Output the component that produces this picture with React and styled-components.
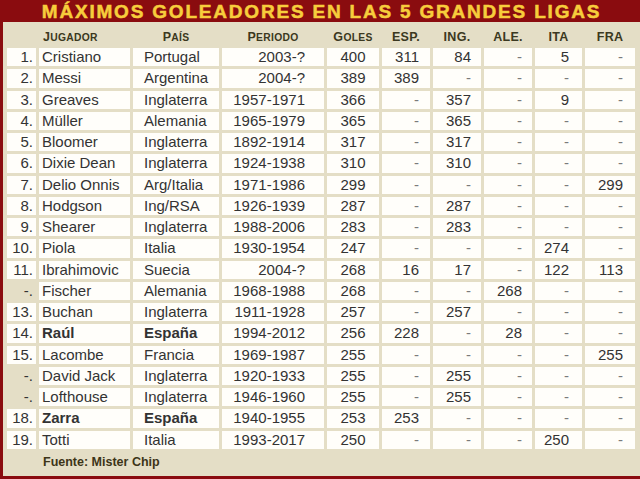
import React from 'react'
import styled, { createGlobalStyle } from 'styled-components'

const GlobalStyle = createGlobalStyle`
    html, body {
        margin: 0;
        padding: 0;
        width: 640px;
        height: 479px;
        overflow: hidden;
        background: #8a0c0f;
    }
`

const COLS = '29px 91px 86px 102px 52px 48px 48px 48px 47px 50px'

// column settings: align + padding
const cols = [
    { align: 'right', pad: '0 3px 0 0' },
    { align: 'left', pad: '0 0 0 3px' },
    { align: 'left', pad: '0 0 0 11px' },
    { align: 'right', pad: '0 19px 0 0' },
    { align: 'center', pad: '0' },
    { align: 'right', pad: '0 11px 0 0' },
    { align: 'right', pad: '0 10px 0 0' },
    { align: 'right', pad: '0 10px 0 0' },
    { align: 'right', pad: '0 13px 0 0' },
    { align: 'right', pad: '0 12px 0 0' },
]

const rows = [
    ['1.', 'Cristiano', 'Portugal', '2003-?', '400', '311', '84', '-', '5', '-'],
    ['2.', 'Messi', 'Argentina', '2004-?', '389', '389', '-', '-', '-', '-'],
    ['3.', 'Greaves', 'Inglaterra', '1957-1971', '366', '-', '357', '-', '9', '-'],
    ['4.', 'Müller', 'Alemania', '1965-1979', '365', '-', '365', '-', '-', '-'],
    ['5.', 'Bloomer', 'Inglaterra', '1892-1914', '317', '-', '317', '-', '-', '-'],
    ['6.', 'Dixie Dean', 'Inglaterra', '1924-1938', '310', '-', '310', '-', '-', '-'],
    ['7.', 'Delio Onnis', 'Arg/Italia', '1971-1986', '299', '-', '-', '-', '-', '299'],
    ['8.', 'Hodgson', 'Ing/RSA', '1926-1939', '287', '-', '287', '-', '-', '-'],
    ['9.', 'Shearer', 'Inglaterra', '1988-2006', '283', '-', '283', '-', '-', '-'],
    ['10.', 'Piola', 'Italia', '1930-1954', '247', '-', '-', '-', '274', '-'],
    ['11.', 'Ibrahimovic', 'Suecia', '2004-?', '268', '16', '17', '-', '122', '113'],
    ['-.', 'Fischer', 'Alemania', '1968-1988', '268', '-', '-', '268', '-', '-'],
    ['13.', 'Buchan', 'Inglaterra', '1911-1928', '257', '-', '257', '-', '-', '-'],
    ['14.', 'Raúl', 'España', '1994-2012', '256', '228', '-', '28', '-', '-', true],
    ['15.', 'Lacombe', 'Francia', '1969-1987', '255', '-', '-', '-', '-', '255'],
    ['-.', 'David Jack', 'Inglaterra', '1920-1933', '255', '-', '255', '-', '-', '-'],
    ['-.', 'Lofthouse', 'Inglaterra', '1946-1960', '255', '-', '255', '-', '-', '-'],
    ['18.', 'Zarra', 'España', '1940-1955', '253', '253', '-', '-', '-', '-', true],
    ['19.', 'Totti', 'Italia', '1993-2017', '250', '-', '-', '-', '250', '-'],
]

// small = first letter big, rest smaller caps
const headers = [
    { t: '' },
    { t: 'Jugador', small: true, left: true },
    { t: 'País', small: true },
    { t: 'Periodo', small: true },
    { t: 'Goles', small: true },
    { t: 'ESP.' },
    { t: 'ING.' },
    { t: 'ALE.' },
    { t: 'ITA' },
    { t: 'FRA' },
]

export default function App() {
    return (
        <Frame>
            <GlobalStyle />
            <Title>MÁXIMOS GOLEADORES EN LAS 5 GRANDES LIGAS</Title>
            <Panel>
                <HeadRow>
                    {headers.map((h, i) => (
                        <HeadCell key={i} $left={h.left}>
                            {h.small ? (
                                <>
                                    {h.t[0]}
                                    <SmallCaps>{h.t.slice(1)}</SmallCaps>
                                </>
                            ) : h.t}
                        </HeadCell>
                    ))}
                </HeadRow>
                <Table>
                    {rows.map((r, ri) => (
                        <Row key={ri}>
                            {r.slice(0, 10).map((v, ci) => (
                                <Cell
                                    key={ci}
                                    $align={cols[ci].align}
                                    $pad={cols[ci].pad}
                                    $blank={ci === 0 && v === '-.'}
                                    $bold={r[10] && (ci === 1 || ci === 2)}
                                    $dash={ci > 3 && v === '-'}
                                >
                                    {v}
                                </Cell>
                            ))}
                        </Row>
                    ))}
                </Table>
                <Source>Fuente: Mister Chip</Source>
            </Panel>
        </Frame>
    )
}

const Frame = styled.div`
    width: 640px;
    height: 479px;
    box-sizing: border-box;
    padding: 0 0 3px 3px;
    background: #8a0c0f;
    display: flex;
    flex-direction: column;
    font-family: "Liberation Sans", Arial, sans-serif;
`

const Title = styled.h1`
    margin: 0;
    height: 22px;
    line-height: 23px;
    text-align: center;
    font-size: 19px;
    font-weight: 700;
    letter-spacing: 1.8px;
    color: #f7cd3c;
    -webkit-text-stroke: 0.5px #f7cd3c;
    white-space: nowrap;
`

const Panel = styled.div`
    flex: 1;
    background: #e4dec6;
    padding: 8px 5px 0 4px;
    display: flex;
    flex-direction: column;
`

const HeadRow = styled.div`
    display: grid;
    grid-template-columns: ${COLS};
    column-gap: 3px;
    height: 14px;
`

const HeadCell = styled.div`
    font-size: 12.5px;
    line-height: 14px;
    font-weight: 700;
    letter-spacing: 0.3px;
    color: #3b3820;
    white-space: nowrap;
    text-align: ${p => (p.$left ? 'left' : 'center')};
    padding-left: ${p => (p.$left ? '4px' : '0')};
`

const SmallCaps = styled.span`
    font-size: 10.3px;
    text-transform: uppercase;
`

const Table = styled.div`
    margin-top: 4px;
    display: flex;
    flex-direction: column;
    gap: 3px;
`

const Row = styled.div`
    display: grid;
    grid-template-columns: ${COLS};
    column-gap: 3px;
    height: 18.25px;
`

const Cell = styled.div`
    background: ${p => (p.$blank ? 'transparent' : '#fffefa')};
    font-size: 15px;
    line-height: 18.25px;
    white-space: nowrap;
    color: ${p => (p.$dash ? '#7a7a7a' : '#333')};
    font-weight: ${p => (p.$bold ? 700 : 400)};
    text-align: ${p => p.$align};
    padding: ${p => p.$pad};
    overflow: hidden;
`

const Source = styled.div`
    margin-top: 6px;
    padding-left: 36px;
    font-size: 12.5px;
    line-height: 14px;
    font-weight: 700;
    color: #3d3518;
`
